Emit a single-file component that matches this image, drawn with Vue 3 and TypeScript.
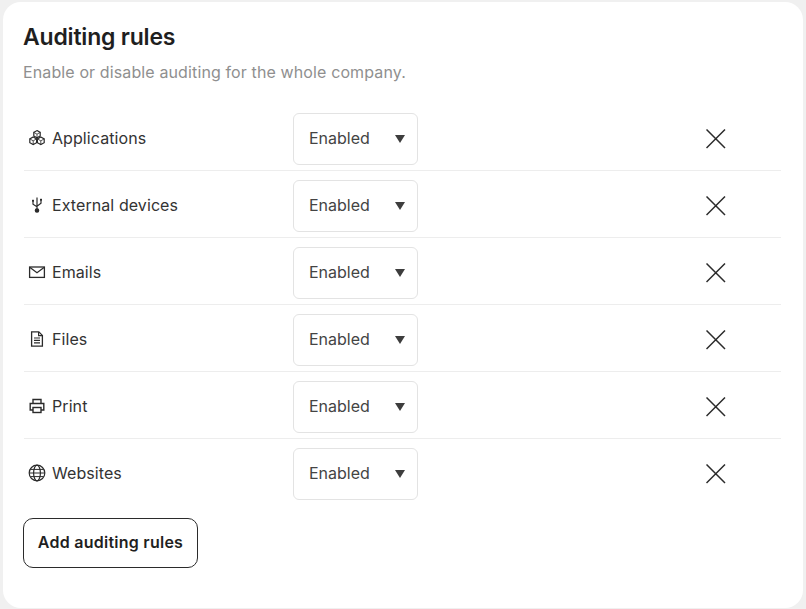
<script setup lang="ts">
interface Rule {
  name: string;
  icon: string;
}

const rules: Rule[] = [
  { name: "Applications", icon: "apps" },
  { name: "External devices", icon: "usb" },
  { name: "Emails", icon: "mail" },
  { name: "Files", icon: "file" },
  { name: "Print", icon: "print" },
  { name: "Websites", icon: "web" },
];
</script>

<template>
  <div class="page">
    <section class="card">
      <h1 class="title">Auditing rules</h1>
      <p class="subtitle">Enable or disable auditing for the whole company.</p>

      <div class="rules">
        <div v-for="rule in rules" :key="rule.name" class="rule">
          <div class="label">
            <svg class="icon" viewBox="0 0 18 18" fill="none" stroke="currentColor" stroke-width="1.2" aria-hidden="true">
              <template v-if="rule.icon === 'apps'">
                <path d="M9 1.6l3.2 1.8v3.6L9 8.8 5.8 7V3.4z" />
                <path d="M5.2 8l3.4 1.9v3.8l-3.4 1.9-3.4-1.9V9.9z" />
                <path d="M12.8 8l3.4 1.9v3.8l-3.4 1.9-3.4-1.9V9.9z" />
                <path d="M5.8 3.4L9 5.2l3.2-1.8M9 5.2v3.6M1.8 9.9l3.4 1.9 3.4-1.9M5.2 11.8v3.8M9.4 9.9l3.4 1.9 3.4-1.9M12.8 11.8v3.8" stroke-width="0.8" />
              </template>
              <template v-else-if="rule.icon === 'usb'">
                <path d="M9 1.5v13M5 5.5v2.7l4 2.6M13 4.5v2.7l-4 3" />
                <circle cx="9" cy="14.5" r="1.7" fill="currentColor" />
                <rect x="4" y="3.8" width="2" height="2" fill="currentColor" stroke="none" />
                <rect x="12" y="2.8" width="2" height="2" fill="currentColor" stroke="none" />
              </template>
              <template v-else-if="rule.icon === 'mail'">
                <rect x="1.6" y="4" width="14.8" height="10.4" stroke-width="1.3" />
                <path d="M2 4.4l7 5.4 7-5.4" stroke-width="1.2" />
              </template>
              <template v-else-if="rule.icon === 'file'">
                <path d="M3.6 1.8h7.2l3.6 3.6v10.8H3.6z" stroke-width="1.3" />
                <path d="M10.6 2v3.6h3.6" />
                <path d="M6 8h6M6 10.4h6M6 12.8h6" />
              </template>
              <template v-else-if="rule.icon === 'print'">
                <path d="M5 6V2.5h8V6" stroke-width="1.4" />
                <path d="M5 13H2.2V6.5h13.6V13H13" stroke-width="1.4" />
                <rect x="5" y="10.5" width="8" height="5" stroke-width="1.4" />
              </template>
              <template v-else>
                <circle cx="9" cy="9" r="7.8" />
                <ellipse cx="9" cy="9" rx="3.4" ry="7.8" />
                <path d="M1.2 9h15.6M2.4 5.4h13.2M2.4 12.6h13.2" stroke-width="1" />
              </template>
            </svg>
            <span>{{ rule.name }}</span>
          </div>
          <div class="select">
            <span>Enabled</span>
            <span class="caret" />
          </div>
          <button class="remove" type="button" aria-label="Remove">
            <svg viewBox="0 0 20 20" width="20" height="20" fill="none" stroke="currentColor" stroke-width="1.5" aria-hidden="true">
              <path d="M0.5 0.5l18.5 18.5M19 0.5L0.5 19" />
            </svg>
          </button>
        </div>
      </div>

      <button class="add" type="button">Add auditing rules</button>
    </section>
  </div>
</template>

<style>
html,
body {
  margin: 0;
  background: #f0f0f0;
}
</style>

<style scoped>
.page {
  box-sizing: border-box;
  width: 806px;
  height: 609px;
  padding: 2px 3px 1px;
  font-family: Inter, "Liberation Sans", sans-serif;
  color: #2b2b2b;
}
.card {
  box-sizing: border-box;
  height: 100%;
  padding: 22px 20px 0;
  border-radius: 18px;
  background: #fff;
}
.title {
  margin: 0;
  font-size: 23px;
  line-height: 26px;
  font-weight: 600;
  letter-spacing: -0.2px;
  color: #1f1f1f;
}
.subtitle {
  margin: 12px 0 0;
  font-size: 16px;
  line-height: 20px;
  color: #8f8f8f;
  letter-spacing: 0.12px;
}
.rules {
  margin-top: 22px;
  margin-left: 1px;
  width: 757px;
}
.rule {
  display: grid;
  grid-template-columns: 269px 125px 1fr;
  align-items: center;
  padding: 9px 0 5px;
  border-bottom: 1px solid #ededed;
}
.rule:last-child {
  border-bottom: 0;
}
.label {
  display: flex;
  align-items: center;
  gap: 6px;
  padding: 0 0 2px 4px;
  font-size: 16px;
  line-height: 20px;
  letter-spacing: 0.08px;
  color: #333;
}
.icon {
  width: 18px;
  height: 18px;
  flex: none;
  color: #2b2b2b;
}
.select {
  box-sizing: border-box;
  display: flex;
  align-items: center;
  justify-content: space-between;
  height: 52px;
  padding: 0 12px 2px 15px;
  border: 1px solid #e3e3e3;
  border-radius: 6px;
  font-size: 16px;
  color: #444;
}
.caret {
  width: 0;
  height: 0;
  margin-top: 2px;
  border-left: 5.5px solid transparent;
  border-right: 5.5px solid transparent;
  border-top: 8px solid #3d3d3d;
}
.remove {
  display: flex;
  justify-self: start;
  margin-left: 288px;
  padding: 0;
  border: 0;
  background: none;
  color: #2b2b2b;
}
.add {
  display: block;
  box-sizing: border-box;
  width: 175px;
  height: 50px;
  margin-top: 13px;
  padding: 0 0 2px;
  border: 1px solid #2b2b2b;
  border-radius: 10px;
  background: #fff;
  font-family: inherit;
  font-size: 16px;
  font-weight: 600;
  letter-spacing: 0.25px;
  color: #1f1f1f;
}
</style>
